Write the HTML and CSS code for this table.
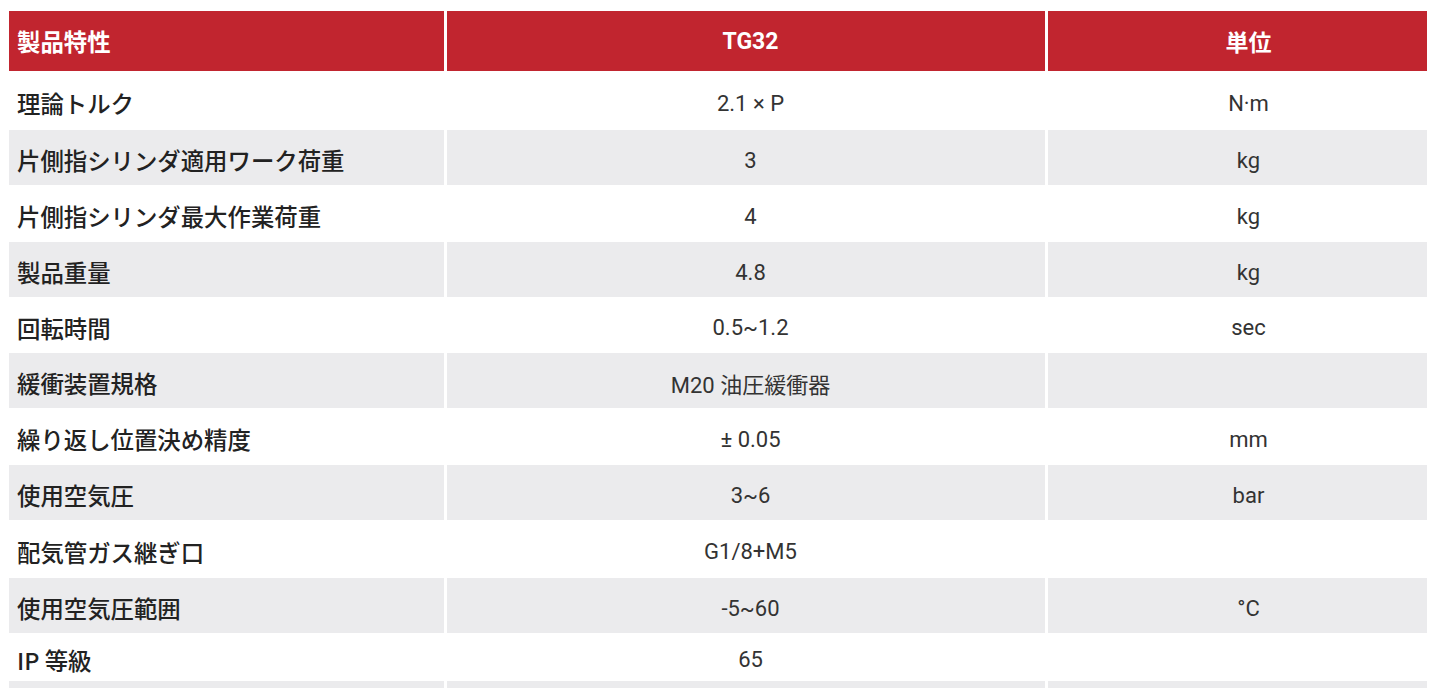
FILE: index.html
```html
<!DOCTYPE html>
<html lang="ja">
<head>
<meta charset="utf-8">
<title>製品特性</title>
<link rel="stylesheet" href="styles.css">
</head>
<body>
<div class="spec">
  <div class="row head">
    <div class="cell label">製品特性</div>
    <div class="cell val">TG32</div>
    <div class="cell unit">単位</div>
  </div>
  <div class="row r1">
    <div class="cell label">理論トルク</div>
    <div class="cell val">2.1 × P</div>
    <div class="cell unit">N·m</div>
  </div>
  <div class="row alt">
    <div class="cell label">片側指シリンダ適用ワーク荷重</div>
    <div class="cell val">3</div>
    <div class="cell unit">kg</div>
  </div>
  <div class="row tall">
    <div class="cell label">片側指シリンダ最大作業荷重</div>
    <div class="cell val">4</div>
    <div class="cell unit">kg</div>
  </div>
  <div class="row alt">
    <div class="cell label">製品重量</div>
    <div class="cell val">4.8</div>
    <div class="cell unit">kg</div>
  </div>
  <div class="row">
    <div class="cell label">回転時間</div>
    <div class="cell val">0.5~1.2</div>
    <div class="cell unit">sec</div>
  </div>
  <div class="row alt">
    <div class="cell label">緩衝装置規格</div>
    <div class="cell val">M20 油圧緩衝器</div>
    <div class="cell unit"></div>
  </div>
  <div class="row tall">
    <div class="cell label">繰り返し位置決め精度</div>
    <div class="cell val">± 0.05</div>
    <div class="cell unit">mm</div>
  </div>
  <div class="row alt">
    <div class="cell label">使用空気圧</div>
    <div class="cell val">3~6</div>
    <div class="cell unit">bar</div>
  </div>
  <div class="row taller">
    <div class="cell label">配気管ガス継ぎ口</div>
    <div class="cell val">G1/8+M5</div>
    <div class="cell unit"></div>
  </div>
  <div class="row alt">
    <div class="cell label">使用空気圧範囲</div>
    <div class="cell val">-5~60</div>
    <div class="cell unit">°C</div>
  </div>
  <div class="row short">
    <div class="cell label">IP 等級</div>
    <div class="cell val">65</div>
    <div class="cell unit"></div>
  </div>
  <div class="row alt strip">
    <div class="cell"></div>
    <div class="cell"></div>
    <div class="cell"></div>
  </div>
</div>
</body>
</html>
```

FILE: styles.css
```css
html, body {
  margin: 0;
  padding: 0;
  background: #ffffff;
}

body {
  padding: 11px 0 0 9px;
  font-family: Roboto, "Noto Sans CJK JP", sans-serif;
}

.spec {
  width: 1418px;
  display: flex;
  flex-direction: column;
}

.row {
  display: grid;
  grid-template-columns: 435px 598px 379px;
  column-gap: 3px;
  height: 56px;
}

.row.head { height: 60px; }
.row.r1 { height: 59px; }
.row.alt { height: 55px; }
.row.tall { height: 57px; }
.row.taller { height: 58px; }
.row.short { height: 48px; }
.row.strip { height: 7px; }

.cell {
  display: flex;
  align-items: center;
  padding-top: 5px;
  box-sizing: border-box;
  font-size: 22px;
  color: #333333;
  white-space: nowrap;
}

.alt .cell {
  background: #ebebed;
}

.label {
  padding-left: 8px;
  font-family: "Noto Sans CJK JP", sans-serif;
  font-weight: 500;
  font-size: 23.4px;
  color: #222222;
}

.val {
  justify-content: center;
  padding-left: 9px;
}

.unit {
  justify-content: center;
  padding-left: 22px;
}

.head .cell {
  background: #c1252f;
  color: #ffffff;
  font-weight: 700;
  font-size: 23px;
  padding-top: 0;
}

.head .label {
  font-weight: 700;
  font-size: 23.4px;
}

.strip .cell {
  padding: 0;
}
```
